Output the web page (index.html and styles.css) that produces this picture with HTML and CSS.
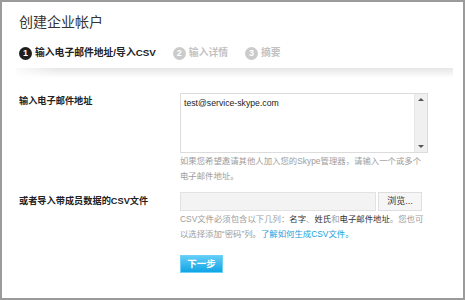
FILE: index.html
```html
<!DOCTYPE html>
<html lang="zh-CN">
<head>
    <meta charset="UTF-8">
    <title>创建企业帐户</title>
    <link rel="stylesheet" href="styles.css">
</head>
<body>
    <div class="frame">
        <h1 class="title">创建企业帐户</h1>

        <ol class="steps">
            <li class="step active"><span class="num">1</span>输入电子邮件地址/导入CSV</li>
            <li class="step"><span class="num">2</span>输入详情</li>
            <li class="step"><span class="num">3</span>摘要</li>
        </ol>

        <div class="divider"></div>

        <form class="form">
            <div class="row">
                <label class="label">输入电子邮件地址</label>
                <div class="field">
                    <div class="textbox">
                        <div class="textbox-text">test@service-skype.com</div>
                        <div class="scrollbar">
                            <span class="arrow up"></span>
                            <span class="arrow down"></span>
                        </div>
                    </div>
                    <p class="hint">如果您希望邀请其他人加入您的Skype管理器，请输入一个或多个<br>电子邮件地址。</p>
                </div>
            </div>

            <div class="row row-csv">
                <label class="label">或者导入带成员数据的CSV文件</label>
                <div class="field">
                    <div class="file">
                        <div class="file-path"></div>
                        <div class="browse">浏览...</div>
                    </div>
                    <p class="hint">CSV文件必须包含以下几列：<b>名字</b>、<b>姓氏</b>和<b>电子邮件地址</b>。您也可<br>以选择添加“密码”列。<a href="#" class="link">了解如何生成CSV文件。</a></p>
                    <button type="button" class="btn">下一步</button>
                </div>
            </div>
        </form>
    </div>
</body>
</html>
```

FILE: styles.css
```css
* {
    margin: 0;
    padding: 0;
    box-sizing: border-box;
}

body {
    font-family: "Liberation Sans", "Noto Sans CJK SC", sans-serif;
    background: #fff;
    color: #333;
}

.frame {
    width: 465px;
    height: 300px;
    border: 2px solid #9b9b9b;
    background: #fff;
    padding: 12px 10px 0 17px;
}

.title {
    font-size: 14px;
    line-height: 16px;
    font-weight: normal;
    color: #333;
}

/* steps */
.steps {
    list-style: none;
    display: flex;
    gap: 17px;
    margin-top: 16px;
    height: 14px;
}

.step {
    display: flex;
    align-items: center;
    gap: 3px;
    font-size: 9.8px;
    line-height: 14px;
    font-weight: bold;
    color: #c2c2c2;
}

.step.active {
    color: #222;
}

.num {
    width: 13px;
    height: 13px;
    border-radius: 50%;
    background: #cbcbcb;
    color: #fff;
    font-size: 9px;
    line-height: 13px;
    text-align: center;
}

.step.active .num {
    background: #1e1e1e;
}

.divider {
    height: 10px;
    margin: 8px 0 0 -3px;
    background:
        linear-gradient(90deg, rgba(255, 255, 255, 0.8), rgba(255, 255, 255, 0) 40px),
        linear-gradient(#e6e6e6, #fff);
}

/* form */
.form {
    margin-top: 15px;
}

.row {
    display: grid;
    grid-template-columns: 161px 248px;
}

.row-csv {
    margin-top: 8px;
}

.label {
    font-size: 9.2px;
    line-height: 14px;
    font-weight: bold;
    color: #222;
    padding-top: 1px;
}

.row-csv .label {
    padding-top: 2px;
}

.textbox {
    display: flex;
    height: 60px;
    border: 1px solid #dcdcdc;
}

.textbox-text {
    flex: 1;
    padding: 3px;
    font-size: 8.7px;
    line-height: 12px;
    color: #222;
}

.scrollbar {
    width: 13px;
    background: #f0f0f0;
    border-left: 1px solid #e6e6e6;
    display: flex;
    flex-direction: column;
    justify-content: space-between;
    align-items: center;
    padding: 4px 0;
}

.arrow {
    width: 0;
    height: 0;
    border-left: 3px solid transparent;
    border-right: 3px solid transparent;
}

.arrow.up {
    border-bottom: 3px solid #555;
}

.arrow.down {
    border-top: 3px solid #555;
}

.hint {
    margin-top: 1px;
    font-size: 8.4px;
    line-height: 15px;
    color: #9d9d9d;
}

.hint b {
    font-weight: normal;
    color: #333;
}

.link {
    color: #1a9fdc;
    text-decoration: none;
}

.file {
    display: flex;
    gap: 2px;
    height: 19px;
}

.file-path {
    width: 196px;
    background: #f3f3f3;
    border: 1px solid #e2e2e2;
}

.browse {
    width: 44px;
    background: #f6f6f6;
    border: 1px solid #dedede;
    font-size: 9px;
    line-height: 17px;
    text-align: center;
    color: #333;
}

.btn {
    display: block;
    margin-top: 13px;
    width: 43px;
    height: 18px;
    border: 1px solid #6fd0f7;
    background: linear-gradient(#63cdf6, #10a5e6);
    color: #fff;
    font-family: inherit;
    font-size: 9.5px;
    font-weight: bold;
    line-height: 16px;
    cursor: pointer;
}
```
